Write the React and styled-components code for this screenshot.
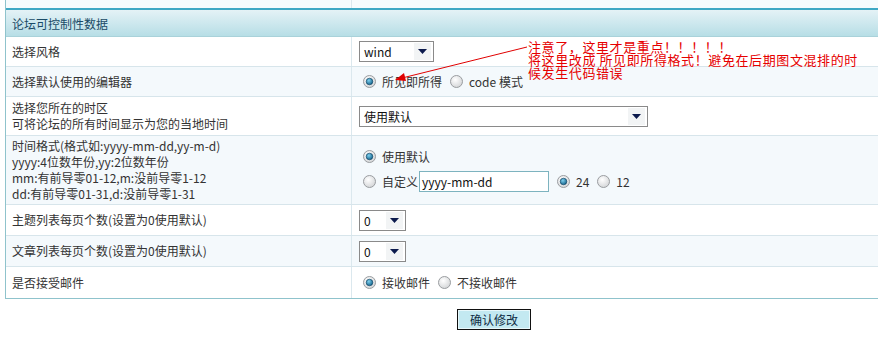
import React from 'react';
import styled, {createGlobalStyle, css} from 'styled-components';

const Global = createGlobalStyle`
    html, body {
        margin: 0;
        padding: 0;
        background: #fff;
        overflow: hidden;
    }
    body {
        font-family: "Noto Sans CJK SC", "DejaVu Sans", sans-serif;
        font-size: 12px;
        color: #333;
    }
`

const Page = styled.div`
    position: relative;
    width: 878px;
    height: 342px;
    padding-left: 5px;
    box-sizing: border-box;
`

const Table = styled.div`
    width: 890px;
    border-left: 1px solid #8fc3cc;
    border-bottom: 1px solid #8fc3cc;
`

const TopStub = styled.div`
    display: grid;
    grid-template-columns: 345px 1fr;
    height: 8px;
    background: #f6fbfd;
    & > div + div {
        border-left: 1px solid #dbe8ee;
    }
`

const Header = styled.div`
    height: 29px;
    box-sizing: border-box;
    border-top: 2px solid #3fa8c4;
    border-bottom: 1px solid #a9d2da;
    background: linear-gradient(#e4f2f6, #b7dee6);
    display: flex;
    align-items: center;
    padding-left: 6px;
    color: #1a4a66;
    font-size: 12px;
`

const Row = styled.div`
    display: grid;
    grid-template-columns: 345px 1fr;
    height: ${props => props.h}px;
    box-sizing: border-box;
    border-bottom: 1px solid #d7e5eb;
    background: #fff;
    ${props => props.alt && css`
        background: #f4f9fc;
    `}
    ${props => props.last && css`
        border-bottom: none;
    `}
`

const Label = styled.div`
    display: flex;
    flex-direction: column;
    justify-content: center;
    padding-left: 6px;
    line-height: 16px;
    color: #333;
`

const Cell = styled.div`
    display: flex;
    flex-direction: column;
    justify-content: center;
    gap: ${props => props.gap || 0}px;
    padding-left: 7px;
    border-left: 1px solid #dbe8ee;
`

const Line = styled.div`
    display: flex;
    align-items: center;
    height: ${props => props.h || 16}px;
`

const SelectBox = styled.div`
    width: ${props => props.w}px;
    height: 21px;
    box-sizing: border-box;
    border: 1px solid #8a8a8a;
    background: #fff;
    display: flex;
    align-items: center;
    justify-content: space-between;
    padding-left: 4px;
    font-size: 12px;
    color: #111;
`

const SelectArrow = styled.div`
    width: 17px;
    height: 17px;
    background: #f2f4f5;
    display: flex;
    align-items: center;
    justify-content: center;
    margin-right: 2px;
`

const Choice = styled.label`
    display: inline-flex;
    align-items: center;
    margin-left: 4px;
    margin-right: ${props => props.tight ? 0 : 4}px;
    color: #333;
    & svg {
        margin-right: 6px;
    }
`

const TextInput = styled.div`
    width: 130px;
    height: 21px;
    box-sizing: border-box;
    border: 1px solid #7db3bf;
    background: #fff;
    display: flex;
    align-items: center;
    padding-left: 2px;
    margin: 0 4px 0 1px;
    color: #111;
    font-size: 12px;
`

const Footer = styled.div`
    display: flex;
    padding: 10px 0 0 452px;
`

const SubmitButton = styled.button`
    width: 74px;
    height: 21px;
    border: 1px solid #111;
    box-shadow: inset 0 0 0 1px #e8f8fb;
    background: #c3e9f1;
    font-family: "Noto Sans CJK SC", sans-serif;
    font-size: 12px;
    color: #0f2d45;
    padding: 0;
`

const Note = styled.div`
    position: absolute;
    left: 528px;
    top: 40px;
    width: 350px;
    color: #e60000;
    font-size: 13px;
    line-height: 13px;
    white-space: pre;
    letter-spacing: 0.6px;
`

const ArrowLayer = styled.svg`
    position: absolute;
    left: 0;
    top: 0;
    pointer-events: none;
`

function Arrow() {
    return (
        <SelectArrow>
            <svg width="9" height="5" viewBox="0 0 9 5">
                <path d="M0 0 H9 L4.5 5 Z" fill="#0c1a4d"/>
            </svg>
        </SelectArrow>
    )
}

function Select({w, value}) {
    return (
        <SelectBox w={w}>
            <span>{value}</span>
            <Arrow/>
        </SelectBox>
    )
}

function Radio({checked}) {
    return (
        <svg width="13" height="13" viewBox="0 0 13 13">
            <defs>
                <radialGradient id="rf" cx="0.4" cy="0.35" r="0.7">
                    <stop offset="0" stopColor="#ffffff"/>
                    <stop offset="1" stopColor="#d2d4d6"/>
                </radialGradient>
                <radialGradient id="rd" cx="0.4" cy="0.35" r="0.7">
                    <stop offset="0" stopColor="#7fd0ee"/>
                    <stop offset="1" stopColor="#0d5d86"/>
                </radialGradient>
            </defs>
            <circle cx="6.5" cy="6.5" r="6" fill="url(#rf)" stroke="#9a9da0" strokeWidth="1"/>
            {checked && <circle cx="6.5" cy="6.5" r="3.3" fill="url(#rd)" stroke="#0a3d5c" strokeWidth="0.6"/>}
        </svg>
    )
}

function Option({checked, tight, children}) {
    return (
        <Choice tight={tight}>
            <Radio checked={checked}/>
            {children}
        </Choice>
    )
}

export default function App() {
    return (
        <Page>
            <Global/>
            <Table>
                <TopStub><div/><div/></TopStub>
                <Header>论坛可控制性数据</Header>
                <Row h={30}>
                    <Label>选择风格</Label>
                    <Cell><Select w={75} value="wind"/></Cell>
                </Row>
                <Row h={30} alt>
                    <Label>选择默认使用的编辑器</Label>
                    <Cell>
                        <Line>
                            <Option checked>所见即所得</Option>
                            <Option>code 模式</Option>
                        </Line>
                    </Cell>
                </Row>
                <Row h={39}>
                    <Label>
                        <div>选择您所在的时区</div>
                        <div>可将论坛的所有时间显示为您的当地时间</div>
                    </Label>
                    <Cell><Select w={289} value="使用默认"/></Cell>
                </Row>
                <Row h={69} alt>
                    <Label>
                        <div>时间格式(格式如:yyyy-mm-dd,yy-m-d)</div>
                        <div>yyyy:4位数年份,yy:2位数年份</div>
                        <div>mm:有前导零01-12,m:没前导零1-12</div>
                        <div>dd:有前导零01-31,d:没前导零1-31</div>
                    </Label>
                    <Cell gap={6}>
                        <Line>
                            <Option checked>使用默认</Option>
                        </Line>
                        <Line h={21}>
                            <Option tight>自定义</Option>
                            <TextInput>yyyy-mm-dd</TextInput>
                            <Option checked>24</Option>
                            <Option>12</Option>
                        </Line>
                    </Cell>
                </Row>
                <Row h={31}>
                    <Label>主题列表每页个数(设置为0使用默认)</Label>
                    <Cell><Select w={47} value="0"/></Cell>
                </Row>
                <Row h={31} alt>
                    <Label>文章列表每页个数(设置为0使用默认)</Label>
                    <Cell><Select w={47} value="0"/></Cell>
                </Row>
                <Row h={31} last>
                    <Label>是否接受邮件</Label>
                    <Cell>
                        <Line>
                            <Option checked>接收邮件</Option>
                            <Option>不接收邮件</Option>
                        </Line>
                    </Cell>
                </Row>
            </Table>
            <Footer>
                <SubmitButton>确认修改</SubmitButton>
            </Footer>
            <Note>{'注意了，这里才是重点！！！！！\n将这里改成 所见即所得格式！避免在后期图文混排的时\n候发生代码错误'}</Note>
            <ArrowLayer width="878" height="342">
                <line x1="527" y1="47" x2="402" y2="78" stroke="#e00000" strokeWidth="1"/>
                <path d="M395 80 L404 73 L406 81 Z" fill="#e00000"/>
            </ArrowLayer>
        </Page>
    )
}
